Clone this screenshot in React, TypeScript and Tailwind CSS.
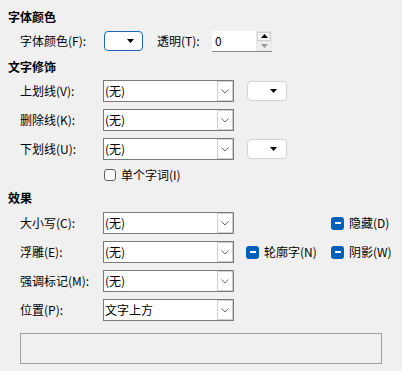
import React from 'react';

const font = { fontFamily: '"Noto Sans CJK SC", "Noto Sans", sans-serif' };

function Chevron() {
  return (
    <svg width="8" height="5" viewBox="0 0 8 5" className="text-[#6d6d6d]">
      <path d="M0.5 0.5 L4 4 L7.5 0.5" fill="none" stroke="currentColor" strokeWidth="1" />
    </svg>
  );
}

function Triangle({ color = '#000' }: { color?: string }) {
  return (
    <svg width="7" height="4" viewBox="0 0 7 4">
      <path d="M0 0 H7 L3.5 4 Z" fill={color} />
    </svg>
  );
}

function Combo({ value }: { value: string }) {
  return (
    <div className="flex h-[22px] w-[131px] items-stretch border border-[#7a7a7a] bg-white">
      <div className="flex flex-1 items-center pl-[1px] text-[12px] leading-none">{value}</div>
      <div className="flex w-[16px] items-center justify-center border border-[#d0d0d0] bg-white">
        <Chevron />
      </div>
    </div>
  );
}

function ColorButton({ focused = false }: { focused?: boolean }) {
  return (
    <div
      className={`flex h-[20px] items-center justify-end rounded-[4px] bg-white ${
        focused ? 'w-[39px] border border-[#1a66c0] pr-[8px]' : 'w-[40px] border border-[#d3d3d3] pr-[9px]'
      }`}
    >
      <Triangle />
    </div>
  );
}

function Minus({ label }: { label: string }) {
  return (
    <div className="flex items-center gap-[5px] text-[12px]">
      <div className="flex h-[13px] w-[13px] items-center justify-center rounded-[3px] bg-[#005fb8]">
        <div className="h-[1.5px] w-[6px] bg-white" />
      </div>
      <span>{label}</span>
    </div>
  );
}

function Row({ label, children }: { label: string; children: React.ReactNode }) {
  return (
    <div className="flex h-[22px] items-center pl-[12px]">
      <div className="w-[83px] text-[12px]">{label}</div>
      {children}
    </div>
  );
}

function Heading({ children }: { children: React.ReactNode }) {
  return <div className="flex h-[20px] items-center text-[12px] font-bold">{children}</div>;
}

export default function App() {
  return (
    <div className="h-[371px] w-[402px] overflow-hidden bg-[#f0f0f0] pl-[8px] pt-[7px] text-black" style={font}>
      <Heading>字体颜色</Heading>

      {/* Font colour + transparency */}
      <div className="mt-[3px] flex h-[22px] items-center pl-[12px]">
        <div className="w-[84px] text-[12px]">字体颜色(F):</div>
        <ColorButton focused />
        <div className="ml-[14px] w-[55px] text-[12px]">透明(T):</div>
        <div className="flex h-[21px] w-[60px] items-stretch border-b border-[#8a8a8a] bg-white">
          <div className="flex flex-1 items-center pl-[3px] text-[12px]">0</div>
          <div className="flex w-[16px] flex-col gap-[1px] bg-[#e9e9e9] p-[1px]">
            <div className="flex flex-1 items-center justify-center border border-[#d0d0d0] bg-[#f3f3f3]">
              <svg width="7" height="4" viewBox="0 0 7 4"><path d="M0 4 H7 L3.5 0 Z" fill="#000" /></svg>
            </div>
            <div className="flex flex-1 items-center justify-center bg-[#eeeeee]">
              <Triangle color="#9a9a9a" />
            </div>
          </div>
        </div>
      </div>

      <div className="mt-[5px]">
        <Heading>文字修饰</Heading>
      </div>
      <div className="mt-[3px] flex flex-col gap-[7px]">
        <Row label="上划线(V):">
          <Combo value="(无)" />
          <div className="ml-[13px]">
            <ColorButton />
          </div>
        </Row>
        <Row label="删除线(K):">
          <Combo value="(无)" />
        </Row>
        <Row label="下划线(U):">
          <Combo value="(无)" />
          <div className="ml-[13px]">
            <ColorButton />
          </div>
        </Row>
      </div>
      <div className="mt-[5px] flex h-[20px] items-center gap-[5px] pl-[96px] text-[12px]">
        <div className="h-[12px] w-[12px] rounded-[3px] border border-[#5f5f5f] bg-[#fbfbfb]" />
        <span>单个字词(I)</span>
      </div>

      <div className="mt-[3px]">
        <Heading>效果</Heading>
      </div>
      <div className="mt-[4px] flex flex-col gap-[7px]">
        <Row label="大小写(C):">
          <Combo value="(无)" />
          <div className="ml-[97px]">
            <Minus label="隐藏(D)" />
          </div>
        </Row>
        <Row label="浮雕(E):">
          <Combo value="(无)" />
          <div className="ml-[12px] w-[85px]">
            <Minus label="轮廓字(N)" />
          </div>
          <Minus label="阴影(W)" />
        </Row>
        <Row label="强调标记(M):">
          <Combo value="(无)" />
        </Row>
        <Row label="位置(P):">
          <Combo value="文字上方" />
        </Row>
      </div>

      {/* Preview */}
      <div className="ml-[12px] mt-[12px] h-[31px] w-[362px] border border-[#a0a0a0]" />
    </div>
  );
}
